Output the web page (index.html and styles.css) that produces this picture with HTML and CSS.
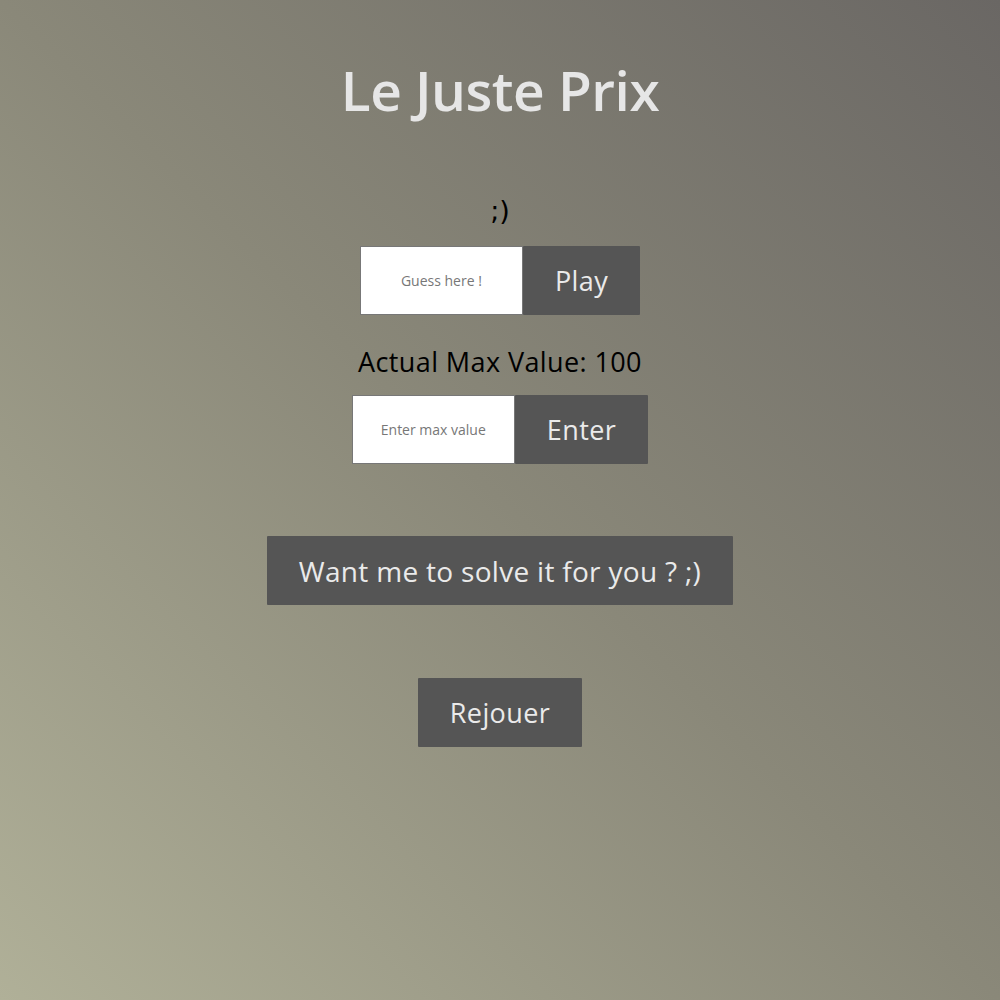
FILE: index.html
```html
<!DOCTYPE html>
<html lang="fr">
<head>
<meta charset="utf-8">
<title>Le Juste Prix</title>
<link rel="stylesheet" href="styles.css">
</head>
<body>
<main class="game">
  <h1 class="title">Le Juste Prix</h1>
  <p class="hint">;)</p>
  <div class="field-row row-guess">
    <input class="field" type="text" placeholder="Guess here !">
    <button class="btn">Play</button>
  </div>
  <p class="max-label">Actual Max Value: 100</p>
  <div class="field-row row-max">
    <input class="field" type="text" placeholder="Enter max value">
    <button class="btn">Enter</button>
  </div>
  <button class="btn btn-solve">Want me to solve it for you ? ;)</button>
  <button class="btn btn-replay">Rejouer</button>
</main>
</body>
</html>
```
FILE: styles.css
```css
html, body {
  margin: 0;
  padding: 0;
}
body {
  min-height: 1000px;
  background: linear-gradient(45deg, #b0b098 0%, #8a8879 50%, #6a6764 100%);
  font-family: "Open Sans", "Liberation Sans", sans-serif;
}
.game {
  display: flex;
  flex-direction: column;
  align-items: center;
}
.title {
  margin: 62px 0 0;
  font-size: 55px;
  line-height: 56px;
  font-weight: 600;
  color: #e6e6e6;
  letter-spacing: -0.5px;
}
.hint {
  margin: 76px 0 0;
  font-family: "DejaVu Sans", sans-serif;
  font-size: 27px;
  line-height: 34px;
  color: #000;
}
.field-row {
  display: flex;
  margin-top: 18px;
}
.row-max {
  margin-top: 16px;
}
.field {
  box-sizing: border-box;
  width: 163px;
  height: 69px;
  margin: 0;
  border: 1px solid #777;
  background: #fff;
  text-align: center;
  font-family: "Open Sans", "Liberation Sans", sans-serif;
  font-size: 14px;
  outline: none;
}
.field::placeholder {
  color: #777;
}
.btn {
  box-sizing: border-box;
  height: 69px;
  margin: 0;
  padding: 0 32px;
  border: none;
  border-radius: 1px;
  background: #555555;
  color: #eaeaea;
  font-family: "Open Sans", "Liberation Sans", sans-serif;
  font-size: 27px;
  letter-spacing: 0.4px;
}
.max-label {
  margin: 30px 0 0;
  font-size: 27px;
  line-height: 34px;
  letter-spacing: 0.4px;
  color: #000;
}
.btn-solve {
  margin-top: 72px;
  font-size: 28px;
  letter-spacing: 0.3px;
}
.btn-replay {
  margin-top: 73px;
}
```
